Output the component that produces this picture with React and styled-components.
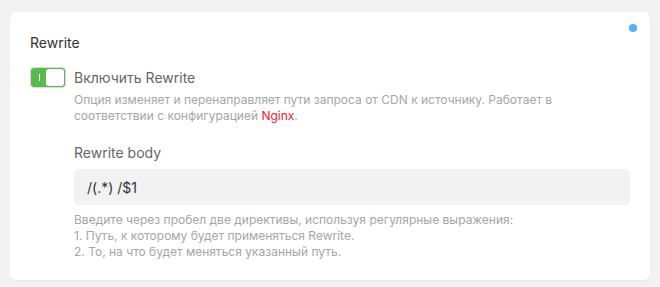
import React, { useState } from 'react';
import styled, { createGlobalStyle } from 'styled-components';

const GlobalStyle = createGlobalStyle`
    html, body {
        margin: 0;
        padding: 0;
        background: #f2f2f2;
        font-family: Inter, "Noto Sans", sans-serif;
    }
`

const Page = styled.div`
    padding: 12px 10px 10px 10px;
`

const Card = styled.section`
    position: relative;
    background: #fff;
    border-radius: 6px;
    padding: 21px 20px 20px 20px;
    box-shadow: 0 1px 2px rgba(0, 0, 0, 0.04);
`

const StatusDot = styled.span`
    position: absolute;
    top: 12px;
    right: 13px;
    width: 8px;
    height: 8px;
    border-radius: 50%;
    background: #4db4f5;
`

const Title = styled.h3`
    margin: 0;
    font-size: 14px;
    line-height: 20px;
    font-weight: 400;
    color: #333;
`

const SwitchRow = styled.div`
    display: flex;
    align-items: flex-start;
    gap: 8px;
    margin-top: 14px;
`

const Switch = styled.button`
    flex: none;
    position: relative;
    width: 36px;
    height: 21px;
    border-radius: 4px;
    border: 1px solid #dcdcdc;
    background: ${props => props.on ? "#57bb4b" : "#ccc"};
    cursor: pointer;
    display: flex;
    align-items: center;
    justify-content: ${props => props.on ? "flex-end" : "flex-start"};
    padding: 1px;
    box-sizing: border-box;
`

const Knob = styled.span`
    width: 18px;
    height: 17px;
    border-radius: 3px;
    background: #fff;
`

const OnMark = styled.span`
    position: absolute;
    left: 8px;
    top: 6px;
    width: 1px;
    height: 7px;
    background: #fff;
`

const SwitchText = styled.div`
    display: flex;
    flex-direction: column;
`

const Label = styled.span`
    font-size: 14px;
    line-height: 21px;
    color: #666;
`

const Hint = styled.p`
    margin: ${props => props.top || "0"} 0 0 0;
    font-size: 12px;
    line-height: 16px;
    color: #a6a6a6;
`

const Red = styled.span`
    color: #e8202a;
`

const Field = styled.div`
    margin: 19px 0 0 44px;
    display: flex;
    flex-direction: column;
`

const FieldLabel = styled.label`
    font-size: 14px;
    line-height: 20px;
    color: #666;
`

const Input = styled.input`
    margin-top: 6px;
    height: 36px;
    box-sizing: border-box;
    border: none;
    outline: none;
    border-radius: 4px;
    background: #f2f2f2;
    padding: 0 13px;
    font-family: inherit;
    font-size: 14px;
    color: #333;
`

const App = () => {
    const [on, setOn] = useState(true);
    const [body, setBody] = useState("/(.*) /$1");

    return (
        <>
            <GlobalStyle />
            <Page>
                <Card>
                    <StatusDot />
                    <Title>Rewrite</Title>
                    <SwitchRow>
                        <Switch on={on} onClick={() => setOn(!on)}>
                            {on && <OnMark />}
                            <Knob />
                        </Switch>
                        <SwitchText>
                            <Label>Включить Rewrite</Label>
                            <Hint top="4px">
                                Опция изменяет и перенаправляет пути запроса от CDN к источнику. Работает в<br />
                                соответствии с конфигурацией <Red>Nginx</Red>.
                            </Hint>
                        </SwitchText>
                    </SwitchRow>
                    <Field>
                        <FieldLabel>Rewrite body</FieldLabel>
                        <Input value={body} onChange={e => setBody(e.target.value)} />
                        <Hint top="7px">
                            Введите через пробел две директивы, используя регулярные выражения:<br />
                            1. Путь, к которому будет применяться Rewrite.<br />
                            2. То, на что будет меняться указанный путь.
                        </Hint>
                    </Field>
                </Card>
            </Page>
        </>
    );
}

export default App;
